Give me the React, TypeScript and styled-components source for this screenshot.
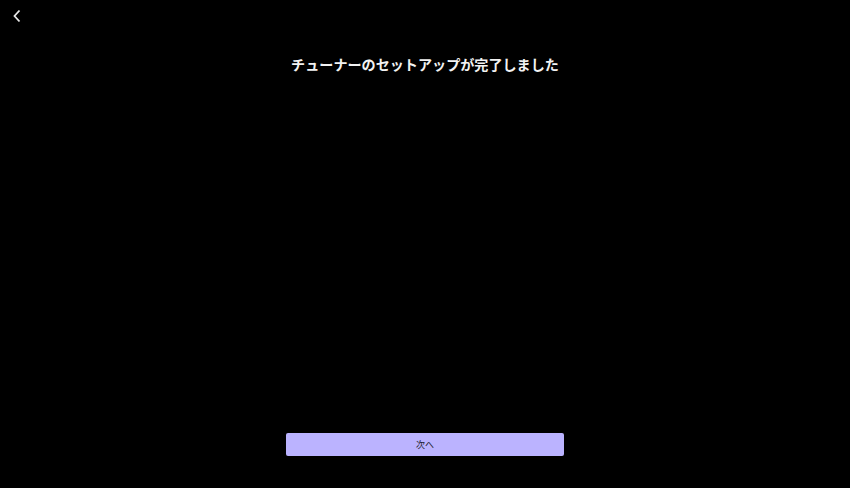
import React from "react";
import styled, { createGlobalStyle } from "styled-components";

const Global = createGlobalStyle`
  html, body { margin: 0; padding: 0; background: #000; }
  body { font-family: "Noto Sans CJK JP", "Noto Sans", sans-serif; }
  #root { height: 100vh; }
`;

const Screen = styled.div`
  height: 488px;
  width: 850px;
  background: #000;
  display: flex;
  flex-direction: column;
  box-sizing: border-box;
`;

const TopBar = styled.div`
  height: 32px;
  display: flex;
  align-items: center;
  padding-left: 8px;
`;

const BackButton = styled.button`
  background: none;
  border: none;
  padding: 0;
  width: 18px;
  height: 18px;
  display: flex;
  align-items: center;
  justify-content: center;
  cursor: pointer;
`;

const Title = styled.h1`
  margin: 21px 0 0;
  text-align: center;
  color: #f2f2f2;
  font-family: "Noto Sans CJK JP", sans-serif;
  font-size: 14.1px;
  font-weight: 700;
  line-height: 22px;
`;

const Spacer = styled.div`
  flex: 1;
`;

const Footer = styled.div`
  display: flex;
  justify-content: center;
  padding-bottom: 32px;
`;

const PrimaryButton = styled.button`
  width: 278px;
  height: 23px;
  border: none;
  border-radius: 2px;
  background: #bbb3ff;
  color: #22222e;
  font-family: "Noto Sans CJK JP", sans-serif;
  font-size: 9px;
  padding: 0;
  cursor: pointer;
`;

export default function App() {
  return (
    <>
      <Global />
      <Screen>
        <TopBar>
          <BackButton aria-label="back">
            <svg width="10" height="14" viewBox="0 0 10 14">
              <path d="M7.5 1.5 L2.5 7 L7.5 12.5" fill="none" stroke="#e8e8e8" strokeWidth="1.8" />
            </svg>
          </BackButton>
        </TopBar>
        <Title>チューナーのセットアップが完了しました</Title>
        <Spacer />
        <Footer>
          <PrimaryButton>次へ</PrimaryButton>
        </Footer>
      </Screen>
    </>
  );
}
